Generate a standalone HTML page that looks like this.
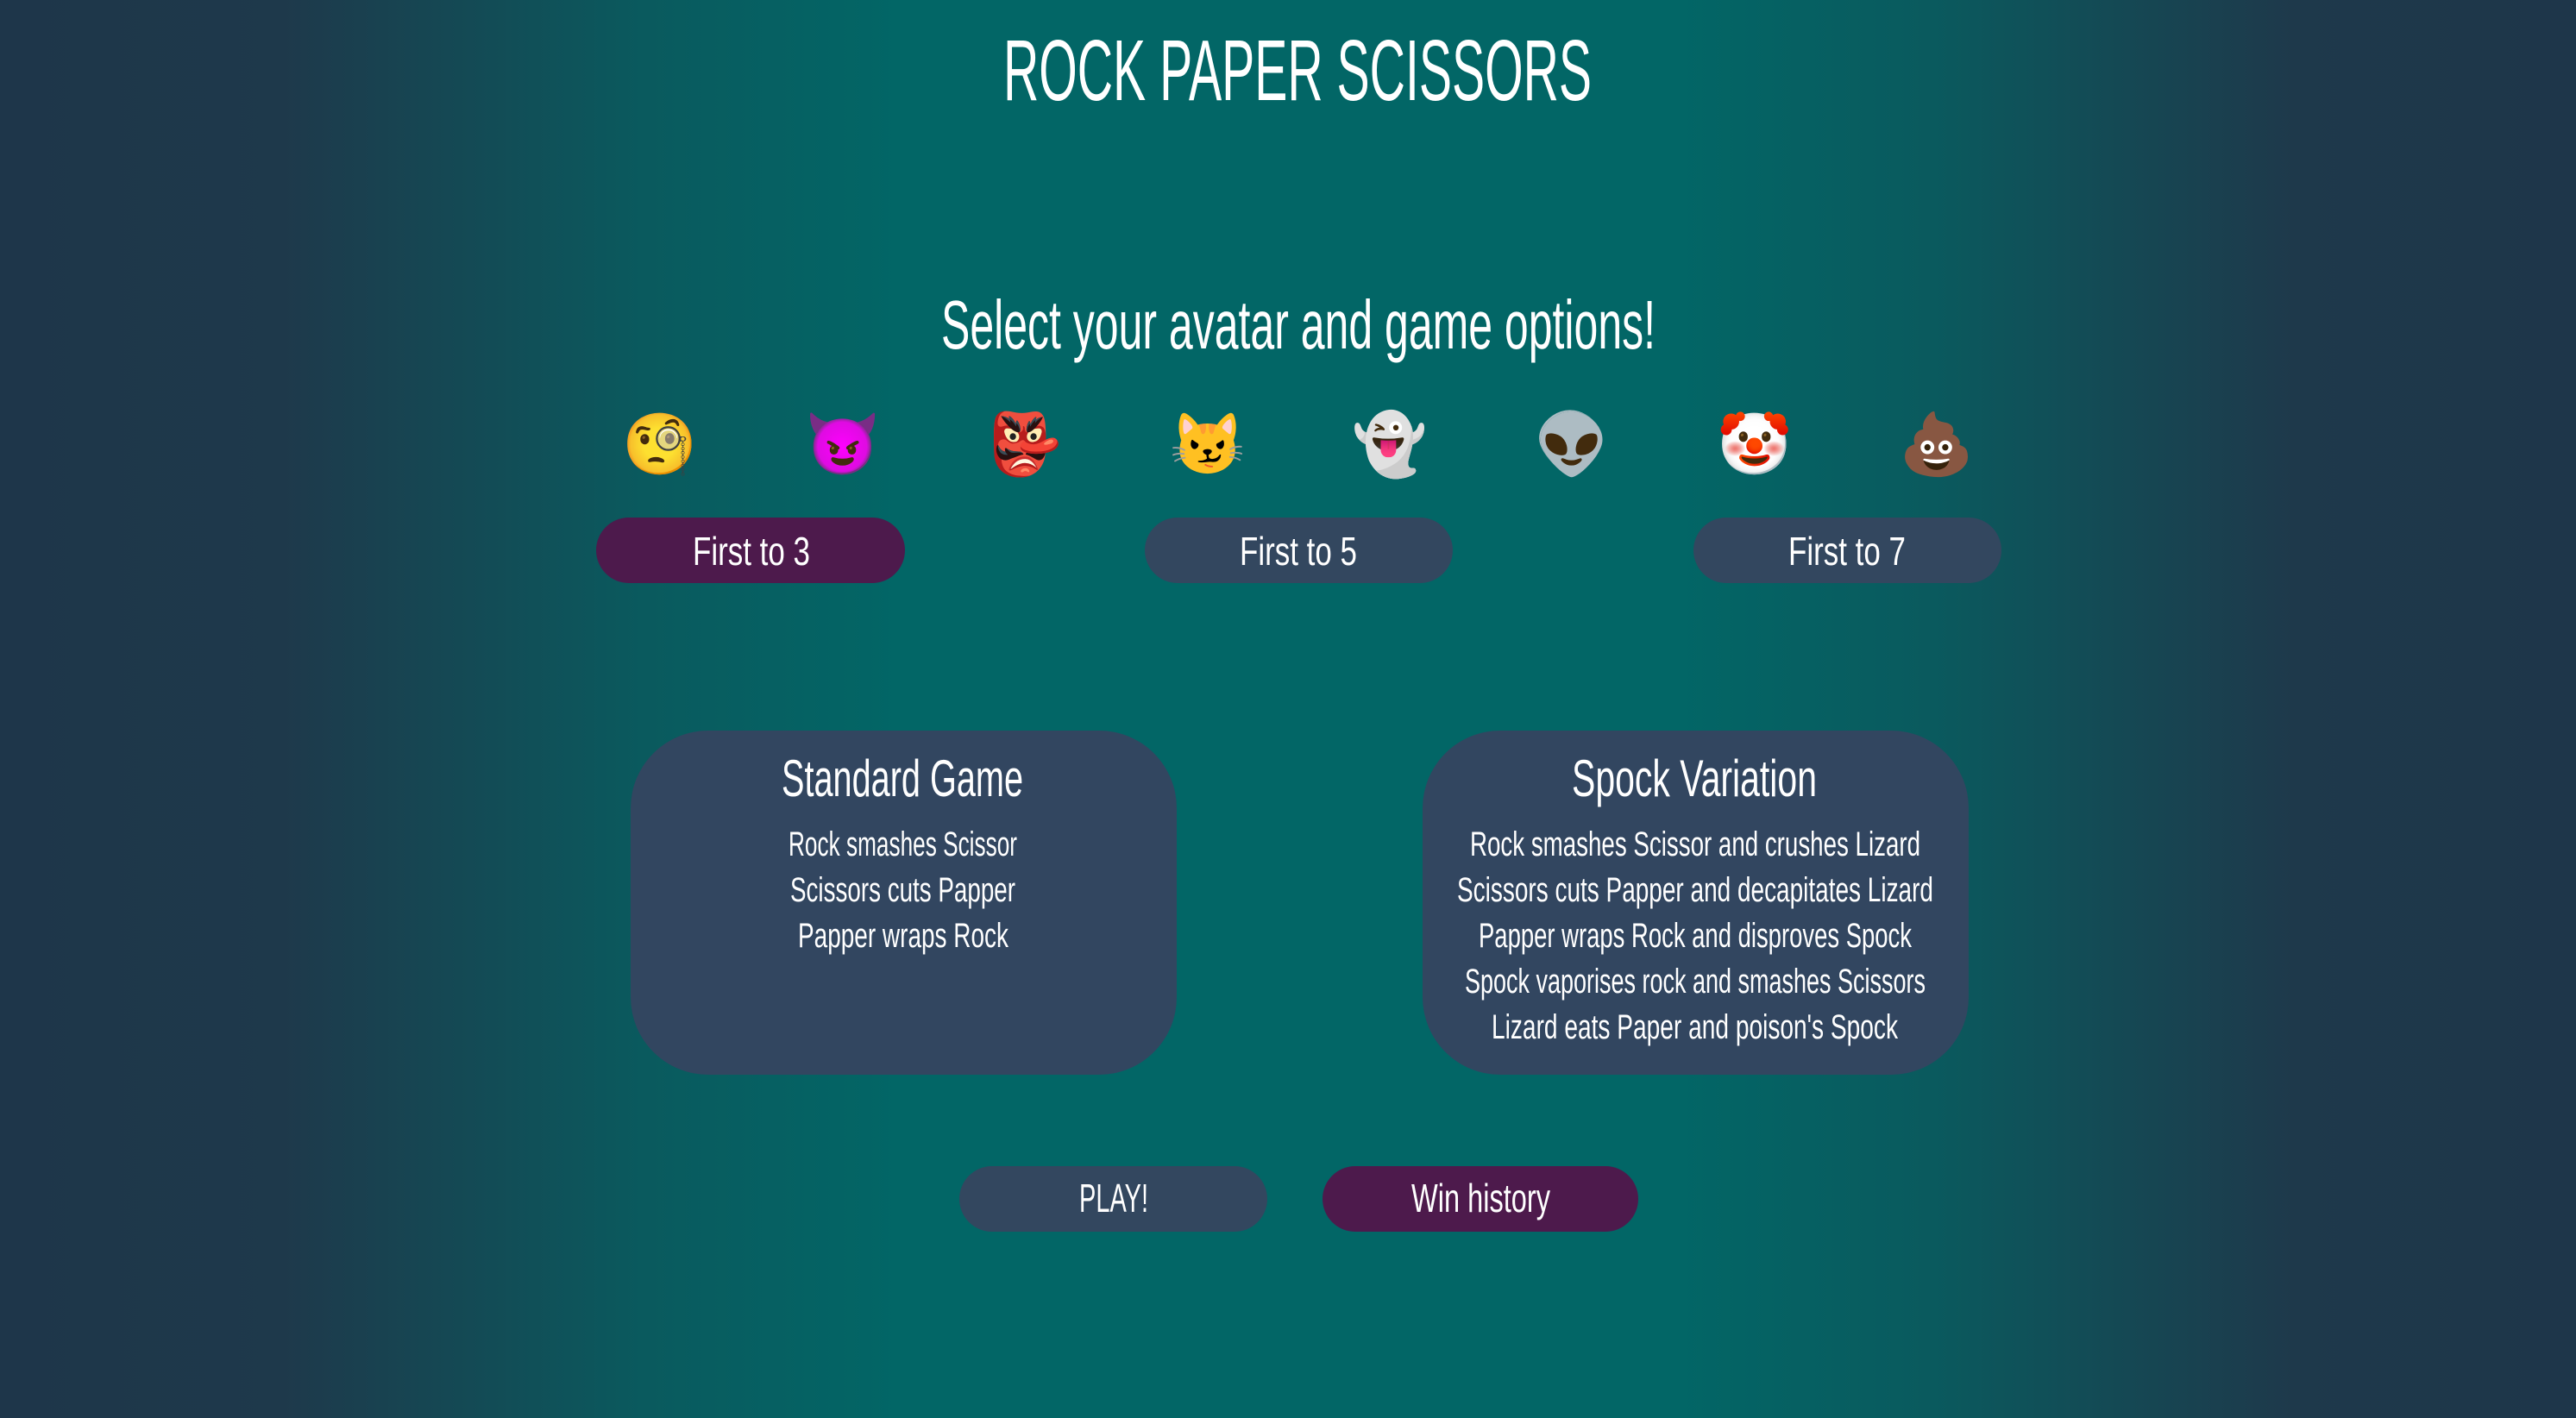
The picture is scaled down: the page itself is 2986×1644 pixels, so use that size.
<!DOCTYPE html>
<html><head><meta charset="utf-8"><style>
html,body{margin:0;padding:0;}
body{width:2986px;height:1644px;overflow:hidden;position:relative;
background:linear-gradient(to right,#1e364a 0%,#1e394b 11%,#0a5a5e 25%,#026666 35%,#026666 65%,#0a5a5e 75%,#1e394b 89%,#1e364a 100%);}
.btn{position:absolute;height:76px;border-radius:38px/38px;}
.p{background:#4d1a4c;}
.s{background:#33475f;}
.card{position:absolute;background:#324660;border-radius:90px;}
.emo{position:absolute;font-size:70px;line-height:1;transform:translateX(-50%);font-family:"Noto Color Emoji","DejaVu Sans",sans-serif;}
svg{position:absolute;left:0;top:0;}
text{font-family:"Liberation Sans Narrow","Liberation Sans",sans-serif;fill:#fff;}
</style></head><body>
<div class="btn p" style="left:691px;top:600px;width:358px;"></div>
<div class="btn s" style="left:1327px;top:600px;width:357px;"></div>
<div class="btn s" style="left:1963px;top:600px;width:357px;"></div>
<div class="card" style="left:731px;top:847px;width:633px;height:399px;"></div>
<div class="card" style="left:1649px;top:847px;width:633px;height:399px;"></div>
<div class="btn s" style="left:1112px;top:1352px;width:357px;"></div>
<div class="btn p" style="left:1533px;top:1352px;width:366px;"></div>

<div class="emo" style="left:765px;top:481px;">🧐</div>
<div class="emo" style="left:977px;top:481px;">😈</div>
<div class="emo" style="left:1188px;top:481px;">👺</div>
<div class="emo" style="left:1400px;top:481px;">😼</div>
<div class="emo" style="left:1611px;top:481px;">👻</div>
<div class="emo" style="left:1822px;top:481px;">👽</div>
<div class="emo" style="left:2034px;top:481px;">🤡</div>
<div class="emo" style="left:2245px;top:481px;">💩</div>

<svg width="2986" height="1644">
<text x="1163" y="116" font-size="100" textLength="682" lengthAdjust="spacingAndGlyphs">ROCK PAPER SCISSORS</text>
<text x="1091" y="404" font-size="80" textLength="828" lengthAdjust="spacingAndGlyphs">Select your avatar and game options!</text>
<text x="803" y="655" font-size="46" textLength="136" lengthAdjust="spacingAndGlyphs">First to 3</text>
<text x="1437" y="655" font-size="46" textLength="136" lengthAdjust="spacingAndGlyphs">First to 5</text>
<text x="2073" y="655" font-size="46" textLength="136" lengthAdjust="spacingAndGlyphs">First to 7</text>
<text x="906" y="923" font-size="60" textLength="280" lengthAdjust="spacingAndGlyphs">Standard Game</text>
<text x="914" y="992" font-size="40" textLength="265" lengthAdjust="spacingAndGlyphs">Rock smashes Scissor</text>
<text x="916" y="1045" font-size="40" textLength="261" lengthAdjust="spacingAndGlyphs">Scissors cuts Papper</text>
<text x="925" y="1098" font-size="40" textLength="244" lengthAdjust="spacingAndGlyphs">Papper wraps Rock</text>
<text x="1822" y="923" font-size="60" textLength="284" lengthAdjust="spacingAndGlyphs">Spock Variation</text>
<text x="1704" y="992" font-size="40" textLength="522" lengthAdjust="spacingAndGlyphs">Rock smashes Scissor and crushes Lizard</text>
<text x="1689" y="1045" font-size="40" textLength="552" lengthAdjust="spacingAndGlyphs">Scissors cuts Papper and decapitates Lizard</text>
<text x="1714" y="1098" font-size="40" textLength="502" lengthAdjust="spacingAndGlyphs">Papper wraps Rock and disproves Spock</text>
<text x="1698" y="1151" font-size="40" textLength="534" lengthAdjust="spacingAndGlyphs">Spock vaporises rock and smashes Scissors</text>
<text x="1729" y="1204" font-size="40" textLength="471" lengthAdjust="spacingAndGlyphs">Lizard eats Paper and poison's Spock</text>
<text x="1251" y="1405" font-size="46" textLength="80" lengthAdjust="spacingAndGlyphs">PLAY!</text>
<text x="1636" y="1405" font-size="46" textLength="161" lengthAdjust="spacingAndGlyphs">Win history</text>
</svg>
</body></html>
